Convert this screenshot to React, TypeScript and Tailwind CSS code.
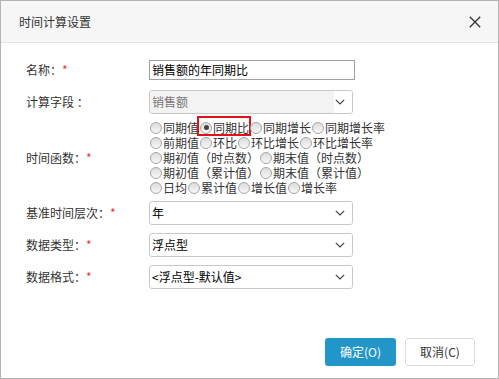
import React from "react";

const FONT = { fontFamily: '"Noto Sans CJK SC", "Noto Sans", sans-serif' };

function Chevron() {
  return (
    <svg width="10" height="6" viewBox="0 0 10 6" className="block">
      <path d="M0.8 0.8 L5 5 L9.2 0.8" fill="none" stroke="#444" strokeWidth="1.2" />
    </svg>
  );
}

function Select({ value, disabled }: { value: string; disabled?: boolean }) {
  return (
    <div className="flex h-[24px] w-[204px] overflow-hidden rounded-[3px] border border-[#c8c8c8] bg-white">
      <div
        className={
          "flex flex-1 items-center pl-[2px] text-[12px] leading-[16px] " +
          (disabled ? "bg-[#f3f3f3] text-[#777]" : "text-black")
        }
      >
        {value}
      </div>
      <div className="flex w-[18px] items-center justify-start bg-white pl-[1px]">
        <Chevron />
      </div>
    </div>
  );
}

function Radio({ checked }: { checked?: boolean }) {
  return (
    <span className="relative mx-[1px] inline-flex h-[12px] w-[12px] shrink-0 items-center justify-center rounded-full border border-[#a6a6a6] bg-[linear-gradient(#dcdcdc,#f8f8f8)]">
      {checked && <span className="h-[5px] w-[5px] rounded-full bg-[#444]" />}
    </span>
  );
}

function Item({ text, checked, boxed }: { text: string; checked?: boolean; boxed?: boolean }) {
  return (
    <span className="relative flex h-[15px] items-center whitespace-nowrap">
      <Radio checked={checked} />
      <span className="inline-block h-[15px] overflow-visible leading-[15px]">{text}</span>
      {boxed && (
        <span className="absolute -left-[2px] -right-[2px] -top-[4px] -bottom-[1px] border-2 border-[#e3111b]" />
      )}
    </span>
  );
}

function Label({ text }: { text: string }) {
  return (
    <div className="w-[123px] shrink-0 text-[12px] leading-[16px] text-[#333]">
      {text}
      <span className="text-[#e33]">*</span>
    </div>
  );
}

export default function App() {
  const lines: { t: string; c?: boolean; b?: boolean }[][] = [
    [{ t: "同期值" }, { t: "同期比", c: true, b: true }, { t: "同期增长" }, { t: "同期增长率" }],
    [{ t: "前期值" }, { t: "环比" }, { t: "环比增长" }, { t: "环比增长率" }],
    [{ t: "期初值（时点数）" }, { t: "期末值（时点数）" }],
    [{ t: "期初值（累计值）" }, { t: "期末值（累计值）" }],
    [{ t: "日均" }, { t: "累计值" }, { t: "增长值" }, { t: "增长率" }],
  ];
  return (
    <div style={FONT} className="flex h-[379px] w-[499px] flex-col border border-[#b4b4b4] bg-white">
      <div className="flex h-[42px] shrink-0 items-center justify-between border-b border-[#e6e6e6] bg-[#f6f6f6] pl-[18px] pr-[17px]">
        <span className="text-[12px] text-[#333]">时间计算设置</span>
        <svg width="12" height="12" viewBox="0 0 12 12">
          <path d="M0.8 0.8 L11.2 11.2 M11.2 0.8 L0.8 11.2" stroke="#333" strokeWidth="1.3" fill="none" />
        </svg>
      </div>

      <div className="flex flex-1 flex-col pl-[25px]">
        <div className="mt-[17px] flex items-center">
          <Label text="名称：" />
          <div className="flex h-[20px] w-[206px] items-center border border-[#a0a0a0] pl-[2px] text-[12px] leading-[16px] text-black">
            销售额的年同期比
          </div>
        </div>

        <div className="mt-[10px] flex items-center">
          <div className="w-[123px] shrink-0 whitespace-pre text-[12px] leading-[16px] text-[#333]">计算字段 ：</div>
          <Select value="销售额" disabled />
        </div>

        <div className="mt-[6px] flex items-center">
          <Label text="时间函数：" />
          <div className="flex flex-col text-[12px] text-[#333]">
            {lines.map((line, i) => (
              <div key={i} className="flex h-[15px] items-center leading-[15px]">
                {line.map((it, j) => (
                  <Item key={j} text={it.t} checked={it.c} boxed={it.b} />
                ))}
              </div>
            ))}
          </div>
        </div>

        <div className="mt-[6px] flex items-center">
          <Label text="基准时间层次：" />
          <Select value="年" />
        </div>

        <div className="mt-[8px] flex items-center">
          <Label text="数据类型：" />
          <Select value="浮点型" />
        </div>

        <div className="mt-[8px] flex items-center">
          <Label text="数据格式：" />
          <Select value="<浮点型-默认值>" />
        </div>

        <div className="mt-[49px] flex justify-end gap-[9px] pr-[23px]">
          <button className="h-[28px] w-[71px] rounded-[3px] bg-[#2196c8] text-[12px] text-white">确定(O)</button>
          <button className="h-[28px] w-[70px] rounded-[3px] border border-[#dcdcdc] bg-white text-[12px] text-[#333]">
            取消(C)
          </button>
        </div>
      </div>
    </div>
  );
}
